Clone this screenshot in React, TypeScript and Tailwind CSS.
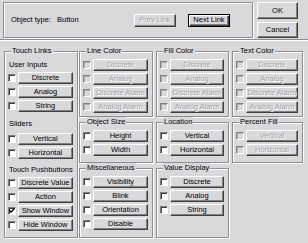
import React from "react";

type BtnProps = {
  label: string;
  disabled?: boolean;
  isDefault?: boolean;
  className?: string;
};

const Btn = ({ label, disabled, isDefault, className = "" }: BtnProps) => {
  const frame = isDefault
    ? "border border-black shadow-[inset_1px_1px_0_#fff,inset_-1px_-1px_0_#404040,inset_-2px_-2px_0_#808080]"
    : "border border-t-white border-l-white border-r-[#404040] border-b-[#404040] shadow-[inset_-1px_-1px_0_#808080]";
  return (
    <div
      className={`flex items-center justify-center bg-[#d9d9dc] text-[7.5px] leading-none whitespace-nowrap ${frame} ${
        disabled ? "text-[#a3a3a6] [text-shadow:1px_1px_0_#fff]" : "text-black"
      } ${className}`}
    >
      {label}
    </div>
  );
};

const Check = ({ disabled, checked }: { disabled?: boolean; checked?: boolean }) => (
  <div
    className={`w-[8px] h-[8px] shrink-0 border border-t-[#808080] border-l-[#808080] border-r-white border-b-white flex items-center justify-center ${
      disabled ? "bg-[#d9d9dc] shadow-[inset_1px_1px_0_#b0b0b0]" : "bg-white shadow-[inset_1px_1px_0_#404040]"
    }`}
  >
    {checked && (
      <svg width="6" height="6" viewBox="0 0 6 6">
        <path d="M0.5 2.5 L2 4 L5.5 0.5" stroke="black" strokeWidth="1.3" fill="none" />
      </svg>
    )}
  </div>
);

const Row = ({ label, disabled, checked }: { label: string; disabled?: boolean; checked?: boolean }) => (
  <div className="flex items-center gap-[2px] h-[12px]">
    <Check disabled={disabled} checked={checked} />
    <Btn label={label} disabled={disabled} className="flex-1 h-[12px]" />
  </div>
);

const Group = ({
  title,
  className = "",
  children,
}: {
  title: string;
  className?: string;
  children: React.ReactNode;
}) => (
  <fieldset
    className={`border border-[#8e8e92] shadow-[1px_1px_0_#fff,inset_1px_1px_0_#fff] px-[3px] pr-[4px] ${className}`}
  >
    <legend className="ml-[3px] px-[1px] text-[7.5px] leading-[10px] bg-[#d9d9dc] whitespace-nowrap">{title}</legend>
    {children}
  </fieldset>
);

const Rows = ({ items, disabled }: { items: string[]; disabled?: boolean }) => (
  <div className="flex flex-col gap-[2px] pt-[3px]">
    {items.map((item) => (
      <Row key={item} label={item} disabled={disabled} />
    ))}
  </div>
);

const colorItems = ["Discrete", "Analog", "Discrete Alarm", "Analog Alarm"];

export default function App() {
  return (
    <div className="w-[308px] h-[243px] overflow-hidden bg-[#d9d9dc] text-black font-['Liberation_Sans',Arial,sans-serif]">
      {/* Header */}
      <div className="flex pt-[2px] pl-[3px]">
        <div className="w-[250px] h-[36px] flex items-center border border-[#8e8e92] shadow-[1px_1px_0_#fff,inset_1px_1px_0_#fff] pl-[7px] pr-[22px]">
          <span className="text-[7.5px]">Object type:</span>
          <span className="text-[7.5px] ml-[6px]">Button</span>
          <div className="ml-auto flex gap-[12px]">
            <Btn label="Prev Link" disabled className="w-[42px] h-[13px]" />
            <Btn label="Next Link" isDefault className="w-[42px] h-[13px]" />
          </div>
        </div>
        <div className="ml-[4px] flex flex-col gap-[3px] w-[41px]">
          <Btn label="OK" className="h-[17px]" />
          <Btn label="Cancel" className="h-[16px]" />
        </div>
      </div>

      {/* Separator */}
      <div className="mt-[1px] border-t border-t-[#8e8e92] border-b border-b-white" />

      {/* Groups */}
      <div className="mt-[5px] ml-[4px] grid grid-cols-[72px_74px_73px_71px] gap-[3px] text-[7.5px]">
        <Group title="Touch Links" className="h-[192px]">
          <div className="mt-[4px] leading-[10px] pl-[1px] whitespace-nowrap">User Inputs</div>
          <div className="flex flex-col gap-[2px] mt-[2px]">
            <Row label="Discrete" />
            <Row label="Analog" />
            <Row label="String" />
          </div>
          <div className="mt-[7px] leading-[10px] pl-[1px] whitespace-nowrap">Sliders</div>
          <div className="flex flex-col gap-[2px] mt-[4px]">
            <Row label="Vertical" />
            <Row label="Horizontal" />
          </div>
          <div className="mt-[6px] leading-[10px] pl-[1px] whitespace-nowrap">Touch Pushbuttons</div>
          <div className="flex flex-col gap-[2px] mt-[2px]">
            <Row label="Discrete Value" />
            <Row label="Action" />
            <Row label="Show Window" checked />
            <Row label="Hide Window" />
          </div>
        </Group>

        <div className="flex flex-col">
          <Group title="Line Color" className="h-[71px]">
            <Rows items={colorItems} disabled />
          </Group>
          <Group title="Object Size" className="h-[46px]">
            <Rows items={["Height", "Width"]} />
          </Group>
          <Group title="Miscellaneous" className="h-[75px]">
            <Rows items={["Visibility", "Blink", "Orientation", "Disable"]} />
          </Group>
        </div>

        <div className="flex flex-col">
          <Group title="Fill Color" className="h-[71px]">
            <Rows items={colorItems} disabled />
          </Group>
          <Group title="Location" className="h-[46px]">
            <Rows items={["Vertical", "Horizontal"]} />
          </Group>
          <Group title="Value Display" className="h-[75px]">
            <Rows items={["Discrete", "Analog", "String"]} />
          </Group>
        </div>

        <div className="flex flex-col">
          <Group title="Text Color" className="h-[71px]">
            <Rows items={colorItems} disabled />
          </Group>
          <Group title="Percent Fill" className="h-[46px]">
            <Rows items={["Vertical", "Horizontal"]} disabled />
          </Group>
        </div>
      </div>
    </div>
  );
}
